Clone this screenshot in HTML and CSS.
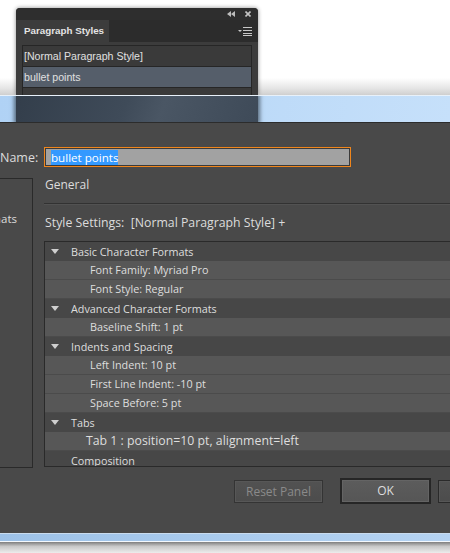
FILE: index.html
```html
<!DOCTYPE html>
<html>
<head>
<meta charset="utf-8">
<link rel="stylesheet" href="styles.css">
</head>
<body>
<div class="top">
  <div class="panel">
    <div class="panel-bar">
      <svg class="ico-collapse" width="8" height="6" viewBox="0 0 8 6"><path d="M4 0L0 3L4 6Z M8 0L4 3L8 6Z" fill="#bdbdbd"/></svg>
      <svg class="ico-close" width="6" height="6" viewBox="0 0 6 6"><path d="M0.5 0.5L5.5 5.5M5.5 0.5L0.5 5.5" stroke="#c4c4c4" stroke-width="1.6"/></svg>
    </div>
    <div class="panel-tabs">
      <div class="tab">Paragraph Styles</div>
      <svg class="ico-menu" width="14" height="9" viewBox="0 0 14 9"><path d="M0 3H4L2 5Z" fill="#c8c8c8"/><path d="M5 0.5H14M5 3.5H14M5 6.5H14" stroke="#c8c8c8" stroke-width="1"/><path d="M5 8.5H14" stroke="#c8c8c8" stroke-width="1"/></svg>
    </div>
    <div class="panel-body">
      <div class="plist">
        <div class="pitem">[Normal Paragraph Style]</div>
        <div class="pitem psel">bullet points</div>
        <div class="pitem"></div>
      </div>
    </div>
  </div>
</div>
<div class="window">
  <div class="titlebar"><div class="glass-patch"></div></div>
  <div class="content">
    <div class="name-row">
      <div class="name-label">Name:</div>
      <div class="name-input"><span class="selected-text">bullet points</span></div>
    </div>
    <div class="main">
      <div class="sidebar"><div class="side-item">Basic Character Formats</div></div>
      <div class="right">
        <div class="section-title">General</div>
        <div class="rule"></div>
        <div class="settings-label">Style Settings:&nbsp; [Normal Paragraph Style] +</div>
        <div class="tree">
          <div class="row head"><span class="arrow"></span>Basic Character Formats</div>
          <div class="row child">Font Family: Myriad Pro</div>
          <div class="row child">Font Style: Regular</div>
          <div class="row head"><span class="arrow"></span>Advanced Character Formats</div>
          <div class="row child">Baseline Shift: 1 pt</div>
          <div class="row head"><span class="arrow"></span>Indents and Spacing</div>
          <div class="row child">Left Indent: 10 pt</div>
          <div class="row child">First Line Indent: -10 pt</div>
          <div class="row child">Space Before: 5 pt</div>
          <div class="row head"><span class="arrow"></span>Tabs</div>
          <div class="row child tabrow">Tab 1 : position=10 pt, alignment=left</div>
          <div class="row head"><span class="noarrow"></span>Composition</div>
        </div>
      </div>
    </div>
    <div class="buttons">
      <div class="btn disabled">Reset Panel</div>
      <div class="btn default">OK</div>
      <div class="btn last"></div>
    </div>
  </div>
  <div class="frame-bottom"></div>
</div>
<div class="below"></div>
</body>
</html>
```

FILE: styles.css
```css
html, body {
  margin: 0;
  padding: 0;
}
body {
  width: 450px;
  height: 553px;
  overflow: hidden;
  background: #ffffff;
  font-family: "Open Sans", "Noto Sans", sans-serif;
}
.top {
  height: 95px;
  background: linear-gradient(to bottom, #ffffff 0, #ffffff 78px, #e6e6e6 88px, #cfcfcf 95px);
  display: flex;
  flex-direction: column;
  padding-top: 8px;
  padding-left: 16px;
  box-sizing: border-box;
}
.panel {
  width: 242px;
  flex: 1;
  background: #3c3c3c;
  border-radius: 4px 4px 0 0;
  box-shadow: 0 0 4px rgba(0,0,0,0.45);
  display: flex;
  flex-direction: column;
  overflow: hidden;
}
.panel-bar {
  flex-shrink: 0;
  height: 12px;
  background: #2e2e2e;
  display: flex;
  align-items: center;
  justify-content: flex-end;
  padding-right: 7px;
  gap: 10px;
}
.panel-tabs {
  flex-shrink: 0;
  height: 22px;
  background: #2c2c2c;
  display: flex;
  align-items: center;
  justify-content: space-between;
}
.tab {
  width: 93px;
  height: 22px;
  box-sizing: border-box;
  background: #3c3c3c;
  color: #e4e4e4;
  font-family: "Liberation Sans", Arial, sans-serif;
  font-weight: bold;
  font-size: 9.8px;
  line-height: 22px;
  padding-left: 8px;
  white-space: nowrap;
}
.ico-menu {
  margin-right: 6px;
}
.panel-body {
  flex-shrink: 0;
  padding: 3px 6px 0 6px;
}
.plist {
  border: 1px solid #262626;
  border-bottom: none;
}
.pitem {
  height: 20px;
  line-height: 20px;
  border-bottom: 1px solid #262626;
  background: #3a3a3a;
  color: #e0e0e0;
  font-family: "Liberation Sans", Arial, sans-serif;
  font-size: 10.6px;
  padding-left: 1px;
  white-space: nowrap;
}
.pitem.psel {
  background: #555e6a;
}
.window {
  display: flex;
  flex-direction: column;
}
.titlebar {
  height: 26px;
  border-top: 1px solid #e8f1fa;
  border-bottom: 1px solid #2c2c2c;
  background: linear-gradient(100deg, #b0d2f5 0%, #b9d8f7 40%, #c6e0fa 100%);
  display: flex;
  overflow: hidden;
}
.glass-patch {
  margin-left: 16px;
  width: 242px;
  background: linear-gradient(110deg, #333e4b 0%, #3f4b59 45%, #4a5664 60%, #3e4a58 100%);
  box-shadow: 0 0 4px 2px rgba(50,62,76,0.7);
}
.content {
  height: 410px;
  background: #494949;
  box-sizing: border-box;
  padding-top: 24px;
  display: flex;
  flex-direction: column;
  color: #dcdcdc;
}
.name-row {
  display: flex;
  align-items: center;
  gap: 6px;
  height: 20px;
}
.name-label {
  width: 38px;
  text-align: right;
  font-size: 12.5px;
  color: #dcdcdc;
}
.name-input {
  width: 307px;
  height: 20px;
  box-sizing: border-box;
  border: 1px solid #f0861c;
  box-shadow: inset 0 0 0 1px #3a3a3a;
  background: #a2a2a2;
  padding: 2px 0 0 6px;
  display: flex;
  align-items: flex-start;
}
.selected-text {
  background: #3399ff;
  color: #ffffff;
  font-size: 11.6px;
  line-height: 15px;
}
.main {
  display: flex;
  margin-top: 11px;
  height: 290px;
}
.sidebar {
  margin-left: -120px;
  width: 153px;
  box-sizing: border-box;
  border: 1px solid #2a2a2a;
  flex-shrink: 0;
  padding-top: 30px;
}
.side-item {
  text-align: right;
  padding-right: 15px;
  font-size: 11.5px;
  line-height: 19px;
  color: #dcdcdc;
  white-space: nowrap;
}
.right {
  margin-left: 11px;
  width: 470px;
  flex-shrink: 0;
  display: flex;
  flex-direction: column;
}
.section-title {
  font-size: 12px;
  line-height: 14px;
  padding-left: 1px;
}
.rule {
  margin-top: 11px;
  height: 1px;
  background: #323232;
  box-shadow: 0 1px 0 #525252;
}
.settings-label {
  margin-top: 9px;
  line-height: 19px;
  font-size: 12.3px;
  padding-left: 1px;
  white-space: nowrap;
}
.tree {
  margin-top: 9px;
  height: 226px;
  box-sizing: border-box;
  border: 1px solid #2a2a2a;
  overflow: hidden;
}
.row {
  height: 19px;
  box-sizing: border-box;
  line-height: 18px;
  font-size: 10.8px;
  color: #dedede;
  display: flex;
  align-items: center;
  white-space: nowrap;
}
.row.head {
  background: #474747;
  padding-left: 6px;
}
.row.child {
  background: #575757;
  border-bottom: 1px solid #4b4b4b;
  padding-left: 45px;
}
.row.child.tabrow {
  padding-left: 41px;
  font-size: 12.3px;
}
.arrow {
  width: 0;
  height: 0;
  border-left: 4px solid transparent;
  border-right: 4px solid transparent;
  border-top: 5px solid #cfcfcf;
  margin-right: 12px;
}
.noarrow {
  width: 8px;
  margin-right: 12px;
}
.buttons {
  display: flex;
  align-items: center;
  margin-top: 10px;
  padding-left: 234px;
}
.btn {
  flex-shrink: 0;
  width: 89px;
  height: 23px;
  box-sizing: border-box;
  border: 1px solid #343434;
  background: linear-gradient(#525252, #4c4c4c);
  box-shadow: inset 0 0 0 1px #575757;
  font-size: 12px;
  line-height: 21px;
  text-align: center;
  color: #dedede;
}
.btn.disabled {
  color: #8a8a8a;
}
.btn.default {
  width: 91px;
  height: 26px;
  line-height: 22px;
  border: 2px solid #262626;
  margin-left: 17px;
  background: linear-gradient(#5c5c5c, #565656);
  box-shadow: inset 0 0 0 1px #646464;
}
.btn.default + .btn {
  margin-left: 7px;
  border-color: #2a2a2a;
}
.frame-bottom {
  height: 7px;
  border-top: 1px solid #c9dcef;
  border-bottom: 1px solid #f4f8fc;
  background: linear-gradient(100deg, #9dc2e8, #b5d3f2);
}
.below {
  height: 11px;
  background: linear-gradient(#7e7e7e, #c8c8c8 40%, #ececec);
}
```
